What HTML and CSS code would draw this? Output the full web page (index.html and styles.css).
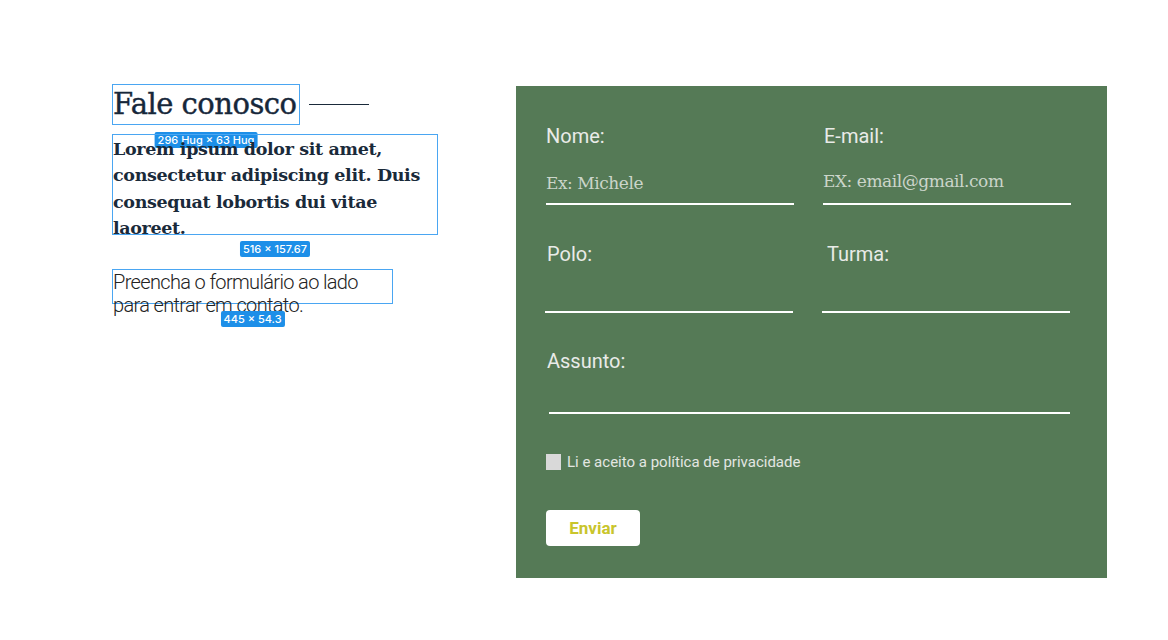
FILE: index.html
```html
<!DOCTYPE html>
<html lang="pt-BR">
<head>
<meta charset="utf-8">
<title>Fale conosco</title>
<link rel="stylesheet" href="styles.css">
</head>
<body>
<main class="page">
  <section class="intro">
    <div class="title-row">
      <div class="sel sel-title">
        <h1 class="title">Fale conosco</h1>
        <span class="badge">296 Hug × 63 Hug</span>
      </div>
      <span class="title-rule"></span>
    </div>
    <div class="sel sel-lead">
      <p class="lead">Lorem ipsum dolor sit amet,<br>consectetur adipiscing elit. Duis<br>consequat lobortis dui vitae<br>laoreet.</p>
      <span class="badge">516 × 157.67</span>
    </div>
    <div class="sel sel-note">
      <p class="note">Preencha o formulário ao lado<br>para entrar em contato.</p>
      <span class="badge">445 × 54.3</span>
    </div>
  </section>

  <form class="panel">
    <div class="row row-1">
      <label class="field">
        <span class="label">Nome:</span>
        <span class="input input-1"><span class="ph">Ex: Michele</span></span>
      </label>
      <label class="field field-right">
        <span class="label">E-mail:</span>
        <span class="input input-1 input-mail"><span class="ph">EX: email@gmail.com</span></span>
      </label>
    </div>
    <div class="row row-2">
      <label class="field field-polo">
        <span class="label label-polo">Polo:</span>
        <span class="input input-2"></span>
      </label>
      <label class="field field-turma">
        <span class="label label-turma">Turma:</span>
        <span class="input input-2"></span>
      </label>
    </div>
    <label class="field field-full">
      <span class="label label-assunto">Assunto:</span>
      <span class="input input-3"></span>
    </label>
    <label class="check">
      <span class="box"></span>
      <span class="check-text">Li e aceito a política de privacidade</span>
    </label>
    <div class="actions">
      <span class="btn">Enviar</span>
    </div>
  </form>
</main>
</body>
</html>
```

FILE: styles.css
```css
* { box-sizing: border-box; }
html, body { margin: 0; padding: 0; background: #ffffff; }
body { font-family: Roboto, "Liberation Sans", sans-serif; }

.page {
  display: flex;
  align-items: flex-start;
  padding: 84px 0 0 112px;
  width: 1168px;
  height: 640px;
}

.intro {
  flex: none;
  width: 404px;
  display: flex;
  flex-direction: column;
  align-items: flex-start;
}

.title-row {
  display: flex;
  align-items: center;
  gap: 9px;
}

.sel {
  position: relative;
  border: 1px solid #4aa6f2;
}

.badge {
  position: absolute;
  left: 50%;
  transform: translateX(-50%);
  top: calc(100% + 8px);
  background: #1d8fe8;
  color: #ffffff;
  font-family: Inter, "Noto Sans", sans-serif;
  font-size: 11px;
  font-weight: 500;
  line-height: 16px;
  padding: 0 3px;
  border-radius: 2px;
  white-space: nowrap;
}

.sel-title { width: 188px; height: 41px; }
.sel-title .badge { top: calc(100% + 8px); }

.title {
  margin: 0;
  font-family: "DejaVu Serif", "Liberation Serif", serif;
  font-weight: 400;
  font-size: 29px;
  line-height: 38px;
  letter-spacing: -0.5px;
  color: #16273a;
  white-space: nowrap;
  -webkit-text-stroke: 0.4px #16273a;
}

.title-rule {
  display: block;
  width: 60px;
  height: 1px;
  background: #1a2a3a;
  margin-top: -1px;
}

.sel-lead { width: 326px; height: 101px; margin-top: 9px; }
.sel-lead .badge { top: calc(100% + 7px); }

.lead {
  margin: 1px 0 0 0;
  font-family: "DejaVu Serif", "Liberation Serif", serif;
  font-weight: 700;
  font-size: 17.5px;
  line-height: 26.3px;
  letter-spacing: -0.35px;
  color: #1a2a3a;
  white-space: nowrap;
}

.sel-note { width: 281px; height: 35px; margin-top: 34px; }
.sel-note .badge { top: calc(100% + 8px); }

.note {
  margin: 1px 0 0 0;
  font-family: Roboto, "Liberation Sans", sans-serif;
  font-weight: 300;
  font-size: 20px;
  line-height: 23px;
  letter-spacing: -0.65px;
  color: #222222;
  white-space: nowrap;
}

/* form panel */
.panel {
  flex: none;
  width: 591px;
  height: 492px;
  margin: 2px 0 0 0;
  background: #557a56;
  padding: 38px 36px 0 30px;
  display: flex;
  flex-direction: column;
}

.row {
  display: grid;
  grid-template-columns: 248px 248px;
  column-gap: 29px;
}

.field { display: flex; flex-direction: column; }

.label {
  font-family: Roboto, "Liberation Sans", sans-serif;
  font-size: 20px;
  line-height: 24px;
  color: #e9ebe8;
}

.input {
  display: block;
  border-bottom: 2px solid #ffffff;
}

.input-1 { height: 57px; padding-top: 23px; }
.input-mail { padding-top: 21px; }

.ph {
  display: block;
  font-family: "DejaVu Serif", "Liberation Serif", serif;
  font-weight: 400;
  font-size: 17px;
  line-height: 24px;
  letter-spacing: -0.45px;
  color: #cbd5ca;
}

.field-right .label { margin-left: 1px; }

.row-2 { margin-top: 37px; column-gap: 29px; margin-left: -1px; }
.label-polo { margin-left: 2px; }
.label-turma { margin-left: 5px; }
.input-2 { height: 47px; }

.field-full { margin-top: 36px; }
.label-assunto { margin-left: 1px; }
.input-3 { height: 41px; margin-left: 3px; width: 521px; }

.check {
  display: flex;
  align-items: center;
  gap: 5px;
  margin-top: 40px;
  height: 16px;
}

.box {
  width: 15px;
  height: 16px;
  background: #d9d9d9;
  flex: none;
}

.check-text {
  font-family: Roboto, "Liberation Sans", sans-serif;
  font-size: 15px;
  line-height: 18px;
  color: #e3e6e2;
  margin-left: 1px;
}

.actions { margin-top: 40px; display: flex; }

.btn {
  display: flex;
  align-items: center;
  justify-content: center;
  width: 94px;
  height: 36px;
  background: #ffffff;
  border-radius: 4px;
  font-family: Roboto, "Liberation Sans", sans-serif;
  font-weight: 700;
  font-size: 17px;
  color: #c9c52c;
}
```
